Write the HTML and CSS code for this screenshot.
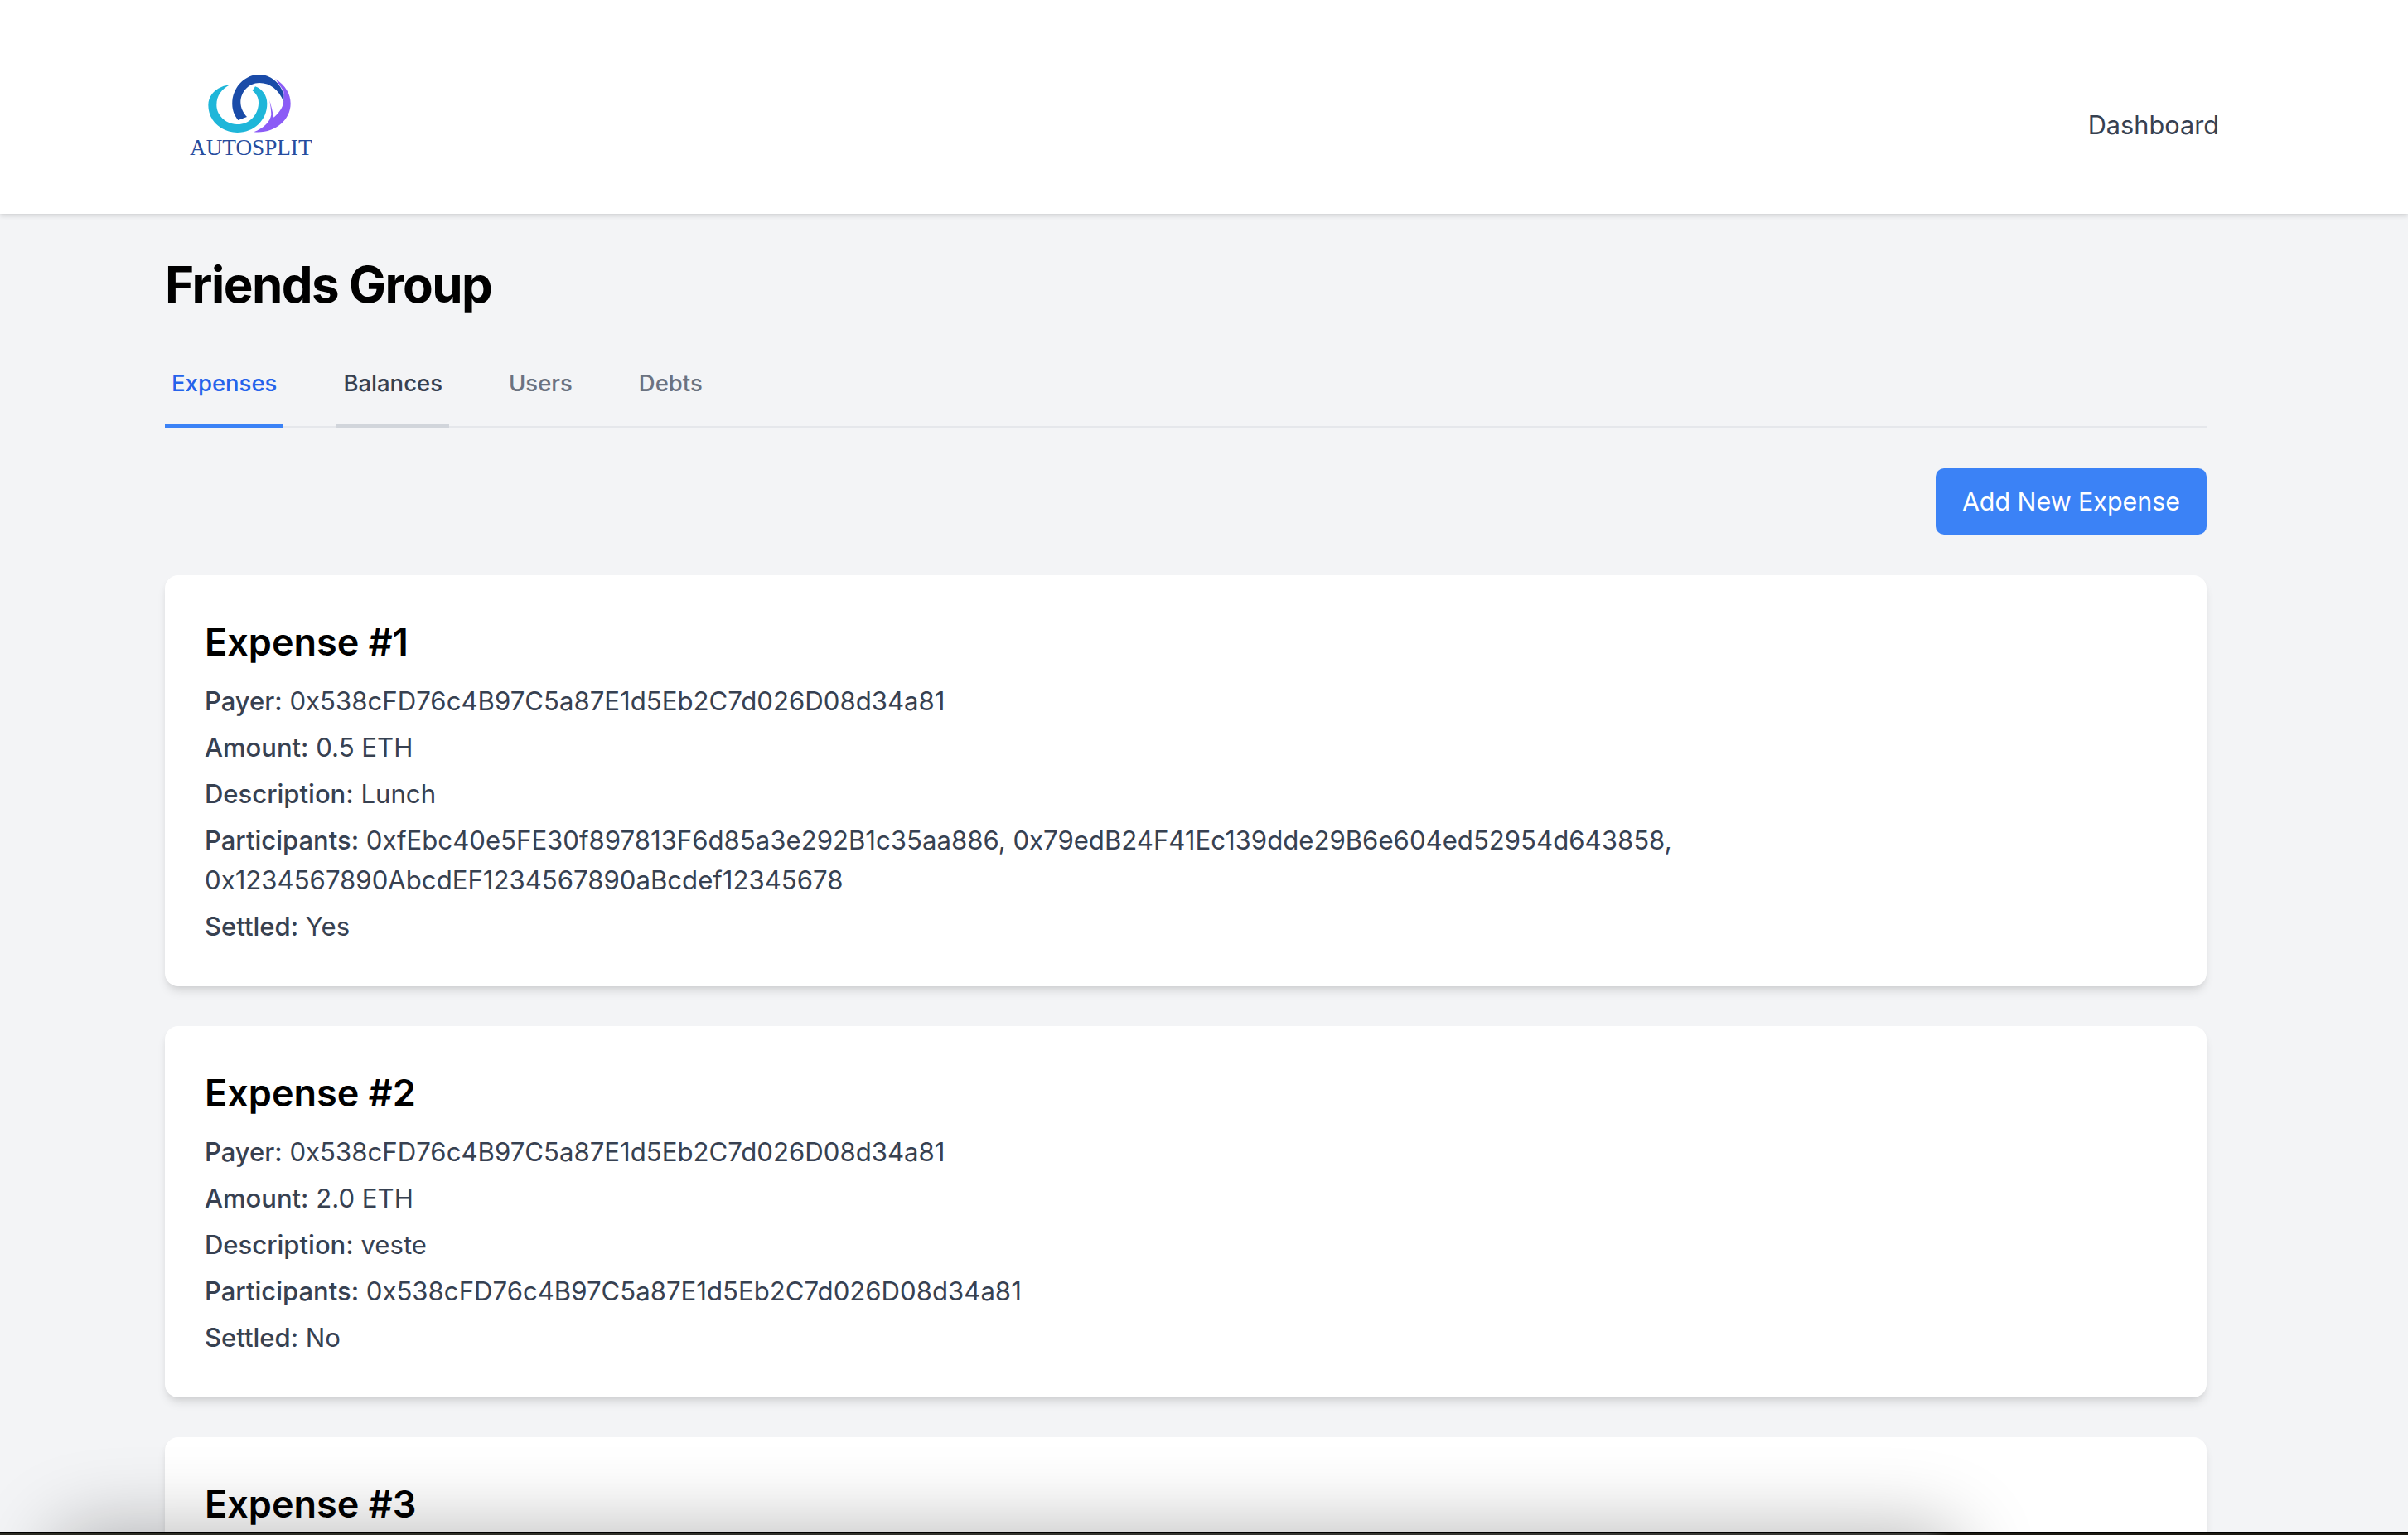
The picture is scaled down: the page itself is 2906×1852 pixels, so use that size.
FILE: index.html
```html
<!DOCTYPE html>
<html lang="en">
<head>
    <meta charset="utf-8">
    <title>Friends Group</title>
    <link rel="stylesheet" href="styles.css">
</head>
<body>
<header class="topbar">
    <a class="logo" href="#">
        <svg class="logo-mark" viewBox="0 0 360 270" width="120" height="90">
            <path fill="#8b5cf6" d="M268 45C305 70 323 100 323 135C323 195 265 245 190 238C225 225 250 200 253 175C252 155 250 140 247 123C252 140 258 165 262 185C285 165 298 145 298 120L298 90Z"/>
            <path fill="#1a4ba8" d="M165 183L133 195C118 175 110 155 112 125C118 70 160 30 210 30C250 30 285 60 298 100L298 128C280 85 250 60 210 60C170 60 142 95 142 130C142 150 152 170 165 183Z"/>
            <path fill="#1fb6d9" d="M103 67C60 72 25 100 25 140C25 200 75 240 130 240C190 240 238 195 238 135C238 105 220 82 195 73L185 88C200 100 208 115 207 135C205 180 170 212 128 210C85 208 55 175 55 140C55 105 75 82 103 67Z"/>
        </svg>
        <span class="logo-text">AUTOSPLIT</span>
    </a>
    <a class="nav-link" href="#">Dashboard</a>
</header>

<main class="main">
    <h1 class="group-title">Friends Group</h1>

    <nav class="tabs">
        <a class="tab tab-active" href="#">Expenses</a>
        <a class="tab tab-hover" href="#">Balances</a>
        <a class="tab" href="#">Users</a>
        <a class="tab" href="#">Debts</a>
    </nav>

    <div class="actions">
        <button class="button-primary">Add New Expense</button>
    </div>

    <section class="card">
        <h2>Expense #1</h2>
        <p><b>Payer:</b> 0x538cFD76c4B97C5a87E1d5Eb2C7d026D08d34a81</p>
        <p><b>Amount:</b> 0.5 ETH</p>
        <p><b>Description:</b> Lunch</p>
        <p class="participants"><b>Participants:</b> 0xfEbc40e5FE30f897813F6d85a3e292B1c35aa886, 0x79edB24F41Ec139dde29B6e604ed52954d643858, 0x1234567890AbcdEF1234567890aBcdef12345678</p>
        <p><b>Settled:</b> Yes</p>
    </section>

    <section class="card">
        <h2>Expense #2</h2>
        <p><b>Payer:</b> 0x538cFD76c4B97C5a87E1d5Eb2C7d026D08d34a81</p>
        <p><b>Amount:</b> 2.0 ETH</p>
        <p><b>Description:</b> veste</p>
        <p><b>Participants:</b> 0x538cFD76c4B97C5a87E1d5Eb2C7d026D08d34a81</p>
        <p><b>Settled:</b> No</p>
    </section>

    <section class="card">
        <h2>Expense #3</h2>
    </section>
</main>

<!-- shadow of the window sitting just under the screen edge -->
<div class="window-shadow"></div>
<div class="desktop-strip"></div>
</body>
</html>
```

FILE: styles.css
```css
html, body {
    height: 100%;
}

body {
    margin: 0;
    overflow: hidden;
    background: #f3f4f6;
    color: #374151;
    font-family: Inter, "Noto Sans", sans-serif;
    font-size: 31px;
    line-height: 48px;
}

a {
    text-decoration: none;
    color: inherit;
}

.topbar {
    height: 258px;
    box-sizing: border-box;
    padding: 0 228px 0 229px;
    display: flex;
    justify-content: space-between;
    align-items: flex-start;
    background: #fff;
    box-shadow: 0 2px 6px rgba(0, 0, 0, .16);
}

.logo {
    display: flex;
    flex-direction: column;
    align-items: center;
    padding-top: 80px;
}

.logo-mark {
    display: block;
}

.logo-text {
    margin-top: -7px;
    font-family: "Liberation Serif", serif;
    font-size: 27.2px;
    line-height: 30px;
    color: #264c9e;
}

.nav-link {
    margin-top: 127px;
    font-size: 30.7px;
    color: #374151;
}

.main {
    width: 2464px;
    margin-left: 199px;
    padding-top: 49px;
}

.group-title {
    margin: 0 0 31px;
    font-size: 60px;
    line-height: 72px;
    font-weight: 700;
    letter-spacing: -1.5px;
    color: #000;
}

.tabs {
    display: flex;
    gap: 64px;
    border-bottom: 2px solid #e5e7eb;
}

.tab {
    padding: 32px 8px 30px;
    margin-bottom: -2px;
    border-bottom: 4px solid transparent;
    font-size: 27.5px;
    line-height: 40px;
    font-weight: 500;
    color: #6b7280;
}

.tab-active {
    color: #2563eb;
    border-bottom-color: #3b82f6;
}

.tab-hover {
    color: #374151;
    border-bottom-color: #d1d5db;
}

.actions {
    display: flex;
    justify-content: flex-end;
    margin: 49px 0 49px;
}

.button-primary {
    height: 80px;
    padding: 0 32px;
    border: 0;
    border-radius: 10px;
    background: #3b82f6;
    color: #fff;
    font-family: inherit;
    font-size: 30.4px;
}

.card {
    margin-bottom: 48px;
    padding: 48px;
    border-radius: 16px;
    background: #fff;
    box-shadow: 0 8px 12px -2px rgba(0, 0, 0, .1), 0 4px 8px -4px rgba(0, 0, 0, .1);
}

.card h2 {
    margin: 0 0 14px;
    font-size: 45px;
    line-height: 66px;
    font-weight: 600;
    color: #000;
}

.card p {
    margin: 0 0 8px;
    font-size: 31.15px;
}

.card p:last-child {
    margin-bottom: 0;
}

.card b {
    font-size: 31px;
    font-weight: 500;
}

.participants {
    max-width: 2100px;
}

.window-shadow {
    position: fixed;
    left: 70px;
    top: 1850px;
    width: 2290px;
    height: 100px;
    border-radius: 40px;
    box-shadow: 0 0 90px 10px rgba(0, 0, 0, .26);
}

.desktop-strip {
    position: fixed;
    left: 0;
    right: 0;
    bottom: 0;
    height: 4px;
    background: linear-gradient(to right, #2b2b22, #3a3a36 80%, #1d1a12 81%);
    border-top: 1px solid #000;
    box-sizing: border-box;
}
```
